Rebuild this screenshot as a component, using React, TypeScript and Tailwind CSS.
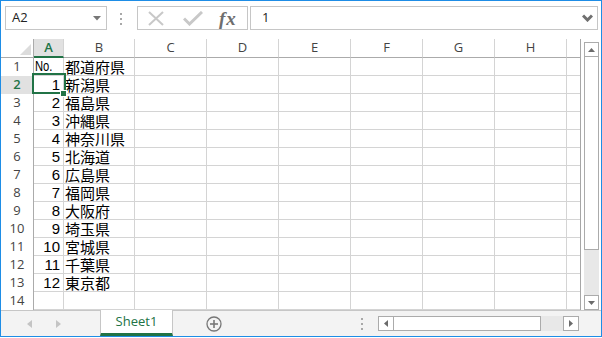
import React from "react";

const colW = ["w-[30px]", "w-[71px]", "w-[72px]", "w-[72px]", "w-[72px]", "w-[72px]", "w-[72px]", "w-[72px]"];
const letters = ["A", "B", "C", "D", "E", "F", "G", "H"];

const data: [string, string][] = [
  ["No.", "都道府県"],
  ["1", "新潟県"],
  ["2", "福島県"],
  ["3", "沖縄県"],
  ["4", "神奈川県"],
  ["5", "北海道"],
  ["6", "広島県"],
  ["7", "福岡県"],
  ["8", "大阪府"],
  ["9", "埼玉県"],
  ["10", "宮城県"],
  ["11", "千葉県"],
  ["12", "東京都"],
  ["", ""],
];

const ui = { fontFamily: '"Open Sans", "Noto Sans", sans-serif' };
const jp = { fontFamily: '"Noto Sans CJK JP", "Noto Sans", sans-serif' };
const num = { fontFamily: '"Liberation Sans", Arial, sans-serif' };

function Dots() {
  return (
    <div className="flex flex-col gap-[3px]">
      <div className="w-[2px] h-[2px] bg-[#a8a8a8]" />
      <div className="w-[2px] h-[2px] bg-[#a8a8a8]" />
      <div className="w-[2px] h-[2px] bg-[#a8a8a8]" />
    </div>
  );
}

export default function App() {
  return (
    <div className="w-[602px] h-[337px] border border-[#1e8de6] bg-white flex flex-col overflow-hidden" style={ui}>
      {/* Formula bar */}
      <div className="h-[38px] shrink-0 flex items-start pt-[5px] pl-[4px]">
        <div className="w-[102px] h-[24px] border border-[#c6c6c6] flex items-center justify-between pl-[6px] pr-[5px]">
          <span className="text-[13px] text-[#222]">A2</span>
          <svg width="8" height="5" viewBox="0 0 8 5"><polygon points="0,0 8,0 4,4.5" fill="#777" /></svg>
        </div>
        <div className="ml-[13px] mt-[7px]"><Dots /></div>
        <div className="ml-[15px] w-[111px] h-[24px] border border-[#c6c6c6] flex items-center pl-[10px]">
          <svg width="16" height="15" viewBox="0 0 16 15">
            <line x1="1" y1="1" x2="15" y2="14" stroke="#c8c8c8" strokeWidth="2" />
            <line x1="15" y1="1" x2="1" y2="14" stroke="#c8c8c8" strokeWidth="2" />
          </svg>
          <svg className="ml-[19px]" width="20" height="15" viewBox="0 0 20 15">
            <polyline points="1,7.5 6.5,13 19,1" fill="none" stroke="#c8c8c8" strokeWidth="3" />
          </svg>
          <span className="ml-[16px] text-[19px] italic font-bold text-[#6e6e6e] leading-none tracking-[1px]" style={{ fontFamily: '"Liberation Serif", serif' }}>fx</span>
        </div>
        <div className="ml-[2px] w-[348px] h-[24px] border border-[#c6c6c6] flex items-center justify-between pl-[11px] pr-[4px]">
          <span className="text-[13px] text-[#222]">1</span>
          <svg width="11" height="8" viewBox="0 0 11 8"><polyline points="1,1.5 5.5,6 10,1.5" fill="none" stroke="#707070" strokeWidth="3" /></svg>
        </div>
      </div>

      {/* Sheet area */}
      <div className="flex h-[271px] shrink-0">
        <div className="relative w-[580px] border-r border-[#a6a6a6] overflow-hidden">
          {/* header row */}
          <div className="flex h-[19px]">
            <div className="w-[33px] h-[19px] border-r border-b border-[#ababab] flex items-end justify-end pr-[2px] pb-[2px]">
              <svg width="11" height="11" viewBox="0 0 11 11"><polygon points="11,0 11,11 0,11" fill="#dcdcdc" /></svg>
            </div>
            {letters.map((l, i) =>
              i === 0 ? (
                <div key={l} className={`${colW[i]} h-[19px] bg-[#e1e1e1] border-r border-[#d4d4d4] border-b-2 border-b-[#217346] flex items-center justify-center text-[13px] font-semibold text-[#217346]`}>
                  {l}
                </div>
              ) : (
                <div key={l} className={`${colW[i]} h-[19px] border-r border-[#d4d4d4] border-b border-b-[#ababab] flex items-center justify-center text-[13px] text-[#444]`}>
                  {l}
                </div>
              )
            )}
            <div className="flex-1 h-[19px] border-b border-[#ababab]" />
          </div>
          {data.map((r, ri) => (
            <div key={ri} className="flex h-[18px]">
              <div
                className={
                  ri === 1
                    ? "w-[33px] h-[18px] border-r border-[#ababab] bg-[#e1e1e1] flex items-center justify-center text-[13px] font-semibold text-[#217346]"
                    : "w-[33px] h-[18px] border-r border-[#ababab] flex items-center justify-center text-[13px] text-[#444]"
                }
              >
                {ri + 1}
              </div>
              {colW.map((w, ci) =>
                ci === 0 ? (
                  <div
                    key={ci}
                    className={`${w} h-[18px] border-r border-b border-[#d4d4d4] flex items-center whitespace-nowrap text-[15px] leading-[17px] text-black ${
                      ri > 0 ? "justify-end pr-[3px]" : "pl-[1px]"
                    }`}
                    style={num}
                  >
                    {ri === 0 ? (
                      <span className="inline-block origin-left scale-x-[0.8] text-[14px]">{r[0]}</span>
                    ) : (
                      r[0]
                    )}
                  </div>
                ) : (
                  <div
                    key={ci}
                    className={`${w} h-[18px] border-r border-b border-[#d4d4d4] flex items-center whitespace-nowrap text-[15px] leading-[17px] text-black pl-[1px]`}
                    style={jp}
                  >
                    {ci === 1 ? r[1] : ""}
                  </div>
                )
              )}
              <div className="flex-1 h-[18px] border-b border-[#d4d4d4]" />
            </div>
          ))}
          {/* selection */}
          <div className="absolute left-[31px] top-[34px] w-[34px] h-[21px] border-2 border-[#217346]" />
          <div className="absolute left-[59px] top-[51px] w-[7px] h-[7px] bg-[#217346] border border-white" />
        </div>
        {/* vertical scrollbar */}
        <div className="ml-[3px] mt-[3px] w-[15px] flex flex-col">
          <div className="h-[15px] border border-[#ababab] bg-white flex items-center justify-center">
            <svg width="7" height="4" viewBox="0 0 7 4"><polygon points="0,4 7,4 3.5,0" fill="#6b6b6b" /></svg>
          </div>
          <div className="h-[193px] border-x border-b border-[#ababab] bg-white" />
          <div className="flex-1 bg-[#e8e8e8]" />
          <div className="h-[15px] border border-[#ababab] bg-white flex items-center justify-center">
            <svg width="7" height="4" viewBox="0 0 7 4"><polygon points="0,0 7,0 3.5,4" fill="#6b6b6b" /></svg>
          </div>
        </div>
      </div>

      {/* tab bar */}
      <div className="flex-1 flex items-stretch border-t border-[#c6c6c6] bg-[#f3f3f3]">
        <div className="w-[99px] flex items-center pl-[26px]">
          <svg width="5" height="8" viewBox="0 0 5 8"><polygon points="5,0 5,8 0,4" fill="#c4c4c4" /></svg>
          <svg className="ml-[24px]" width="5" height="8" viewBox="0 0 5 8"><polygon points="0,0 0,8 5,4" fill="#c4c4c4" /></svg>
        </div>
        <div className="w-[73px] -mt-[1px] bg-white border-x border-[#c6c6c6] border-b-[3px] border-b-[#217346] flex items-center justify-center text-[13px] text-[#217346]">
          Sheet1
        </div>
        <div className="ml-[33px] flex items-center">
          <svg width="16" height="16" viewBox="0 0 16 16">
            <circle cx="8" cy="8" r="7" fill="none" stroke="#777" strokeWidth="1.3" />
            <line x1="8" y1="4" x2="8" y2="12" stroke="#777" strokeWidth="1.6" />
            <line x1="4" y1="8" x2="12" y2="8" stroke="#777" strokeWidth="1.6" />
          </svg>
        </div>
        <div className="ml-[139px] flex items-center"><Dots /></div>
        <div className="ml-[15px] flex items-center">
          <div className="w-[201px] h-[15px] flex">
            <div className="w-[16px] h-[15px] border border-[#ababab] bg-white flex items-center justify-center">
              <svg width="4" height="7" viewBox="0 0 4 7"><polygon points="4,0 4,7 0,3.5" fill="#6b6b6b" /></svg>
            </div>
            <div className="w-[147px] h-[15px] border-y border-r border-[#ababab] bg-white" />
            <div className="flex-1 h-[15px] bg-[#e8e8e8]" />
            <div className="w-[16px] h-[15px] border border-[#ababab] bg-white flex items-center justify-center">
              <svg width="4" height="7" viewBox="0 0 4 7"><polygon points="0,0 0,7 4,3.5" fill="#6b6b6b" /></svg>
            </div>
          </div>
        </div>
      </div>
    </div>
  );
}
